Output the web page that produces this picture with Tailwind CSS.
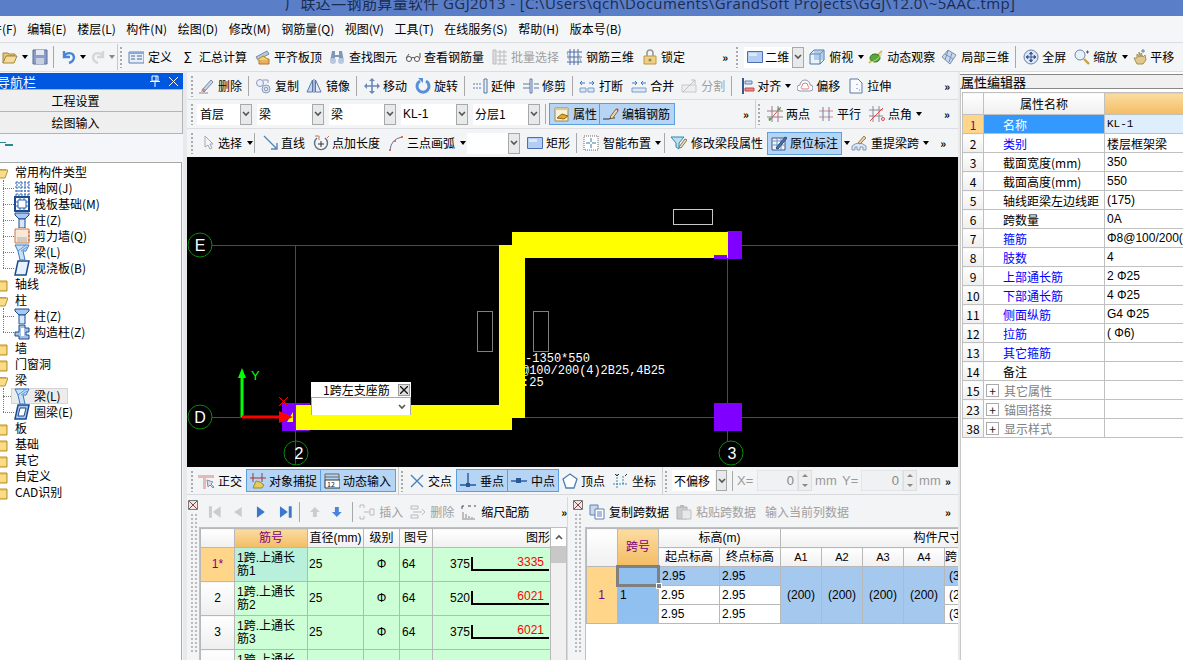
<!doctype html>
<html>
<head>
<meta charset="utf-8">
<title>GGJ2013</title>
<script src="https://cdn.jsdelivr.net/npm/@tailwindcss/browser@4"></script>
</head>
<body class="w-[1183px] h-[660px] overflow-hidden bg-[#f3f4f6] text-[12px] leading-[16px] text-black font-['Noto_Sans_CJK_SC','Liberation_Sans',sans-serif]">

<!-- icon sheet -->
<svg class="hidden">
  <symbol id="open" viewBox="0 0 16 16"><path d="M1 4h5l1 1h6v2H5L1 14z" fill="#e8c878" stroke="#a08840"/><path d="M1 14l3-7h11l-3 7z" fill="#f6dc98" stroke="#a08840"/></symbol>
  <symbol id="save" viewBox="0 0 16 16"><path d="M1 1h14v14H1z" fill="#8a9cc8" stroke="#5a6a98"/><path d="M4 1h8v5H4z" fill="#e4e8f0"/><path d="M4 9h8v6H4z" fill="#c8d0e0"/></symbol>
  <symbol id="undo" viewBox="0 0 16 16"><path d="M3 2v6h6M3 7c3-4 9-4 10 1 0 3-2 5-5 6" fill="none" stroke="#4a86d8" stroke-width="2.4"/></symbol>
  <symbol id="redo" viewBox="0 0 16 16"><path d="M13 2v6H7M13 7c-3-4-9-4-10 1 0 3 2 5 5 6" fill="none" stroke="#d0d8d8" stroke-width="2.4"/></symbol>
  <symbol id="define" viewBox="0 0 16 16"><path d="M1 3h15v11H1z" fill="#e8eef8" stroke="#6080b0"/><path d="M1 3h15v2H1z" fill="#8aa8d8"/><path d="M3 7h4M3 10h4M9 7h5M9 10h5" stroke="#506890"/></symbol>
  <symbol id="level" viewBox="0 0 16 16"><path d="M1 8l11-6 2 3L3 11z" fill="#b8c8e0" stroke="#7088a8"/><path d="M4 10h10v5H4z" fill="#e8b060" stroke="#b07830"/><path d="M2 11l6-4 6 4" fill="#f0d860" stroke="#b08820"/></symbol>
  <symbol id="binoc" viewBox="0 0 16 16"><path d="M3 2h3v4h4V2h3l2 11h-5V8H6v5H1z" fill="#8098b8"/><circle cx="4" cy="12" r="3" fill="#b8c8e0"/><circle cx="12" cy="12" r="3" fill="#b8c8e0"/></symbol>
  <symbol id="glass" viewBox="0 0 16 16"><circle cx="4" cy="10" r="2.5" fill="#fff" stroke="#555"/><circle cx="12" cy="10" r="2.5" fill="#fff" stroke="#555"/><path d="M6 9q2-1 4 0M1 9l3-4M15 9V4" fill="none" stroke="#555"/></symbol>
  <symbol id="batch" viewBox="0 0 16 16"><path d="M1 1h3v14H1zM5 3h10M5 7h10M5 11h10M5 15h10M8 1v14M12 1v14" fill="#ddd" stroke="#bcbcbc"/></symbol>
  <symbol id="cage" viewBox="0 0 16 16"><path d="M1 3h15M1 8h15M1 13h15M4 0v16M8 0v16M12 0v16" stroke="#4a6ca8" fill="none"/><path d="M1 3l3 10M12 3l3 10" stroke="#9ab" fill="none"/></symbol>
  <symbol id="lock" viewBox="0 0 16 16"><path d="M5 7V4a3 3 0 0 1 6 0v3" fill="none" stroke="#999" stroke-width="1.6"/><path d="M2 7h12v8H2z" fill="#f0d080" stroke="#b89840"/><circle cx="8" cy="11" r="1.5" fill="#886"/></symbol>
  <symbol id="rect" viewBox="0 0 16 16"><path d="M.5 2.5h15v11H.5z" fill="#b4cdf2" stroke="#4f6fb4"/><path d="M2 4h8v3H2z" fill="#dbe7fa"/></symbol>
  <symbol id="cube" viewBox="0 0 16 16"><path d="M1 5l4-4h10v10l-4 4H1z" fill="#e8f2fa" stroke="#5078a0"/><path d="M1 5h10v10M11 5l4-4" fill="none" stroke="#5078a0"/><path d="M5 1h10v10H5z" fill="#7aa8d8" opacity=".5"/></symbol>
  <symbol id="orbit" viewBox="0 0 16 16"><path d="M1 14L14 2" stroke="#d8c050" stroke-width="2"/><ellipse cx="7" cy="9" rx="5" ry="4" fill="#58a838" stroke="#307018"/><path d="M2 13q6 0 12-8" fill="none" stroke="#b8d8a0"/></symbol>
  <symbol id="part" viewBox="0 0 16 16"><path d="M1 8l6-7 8 5-6 9z" fill="#c8d8ee" stroke="#7890b0"/><path d="M4 5l8 5M7 2l-3 9M11 4l-3 9" stroke="#7890b0" fill="none"/></symbol>
  <symbol id="full" viewBox="0 0 16 16"><circle cx="8" cy="8" r="7" fill="#dce6f4" stroke="#6a84ac"/><path d="M8 3v10M3 8h10M8 3l-1.500 2h3zM8 13l-1.500-2h3zM3 8l2-1.500v3zM13 8l-2-1.500v3z" stroke="#3a5a90" fill="#3a5a90"/></symbol>
  <symbol id="zoom" viewBox="0 0 16 16"><circle cx="6" cy="6" r="5" fill="#e8f0fa" stroke="#7088a8"/><path d="M10 10l5 5" stroke="#c8a040" stroke-width="2.400"/><path d="M12 3h3M13.500 1.500v3" stroke="#555"/></symbol>
  <symbol id="hand" viewBox="0 0 16 16"><path d="M2 9h3V5l2 3V3l2 5V4l2 4 2-2 1 5-3 4H5z" fill="#e0c890" stroke="#a89050"/><path d="M11 0v4M9 2h4" stroke="#6080a0"/></symbol>
  <symbol id="erase" viewBox="0 0 16 16"><path d="M1 15h9" stroke="#889"/><path d="M4 12l9-10 2 2-9 10z" fill="#c8d4e8" stroke="#7a88a8"/><path d="M3 14l2-4 3 2z" fill="#c88868"/></symbol>
  <symbol id="copy" viewBox="0 0 16 16"><circle cx="5" cy="5" r="3.500" fill="#eef" stroke="#8a9ab8"/><circle cx="11" cy="11" r="4" fill="#dde6f4" stroke="#8a9ab8"/><circle cx="11" cy="11" r="1.800" fill="none" stroke="#8a9ab8"/><path d="M8 2h5v3" stroke="#8a9ab8" fill="none"/></symbol>
  <symbol id="mirror" viewBox="0 0 16 16"><path d="M8 1v14" stroke="#5a78a8"/><path d="M6.500 2v12H1z" fill="#c8d8f0" stroke="#5a78a8"/><path d="M9.500 2v12H15z" fill="#e8eef8" stroke="#5a78a8"/></symbol>
  <symbol id="move" viewBox="0 0 16 16"><path d="M8 1v14M1 8h14" stroke="#6888b8" stroke-width="1.600"/><path d="M8 0l3 3H5zM8 16l3-3H5zM0 8l3-3v6zM16 8l-3-3v6z" fill="#6888b8"/></symbol>
  <symbol id="rotate" viewBox="0 0 16 16"><path d="M5 3a6 6 0 1 0 6 0" fill="none" stroke="#5890d8" stroke-width="3"/><path d="M3 0h5v5z" fill="#5890d8"/></symbol>
  <symbol id="extend" viewBox="0 0 16 16"><path d="M1 6h9M1 10h9" stroke="#5a78a8" stroke-dasharray="2 1"/><path d="M12 1h3v14h-3z" fill="#e8eef8" stroke="#5a78a8"/></symbol>
  <symbol id="trim" viewBox="0 0 16 16"><path d="M0 6h8M0 10h8M11 6h5M11 10h5" stroke="#5a78a8"/><path d="M7 1h2v14H7z" fill="#e8eef8" stroke="#5a78a8"/></symbol>
  <symbol id="break" viewBox="0 0 16 16"><path d="M1 10h6v4H1zM9 10h6v4H9z" fill="#dce8f8" stroke="#7a9cc8"/><path d="M1 5h5M1 5l2-2M1 5l2 2M15 5h-5M15 5l-2-2M15 5l-2 2" stroke="#3878c8" fill="none"/></symbol>
  <symbol id="merge" viewBox="0 0 16 16"><path d="M1 10h14v4H1z" fill="#dce8f8" stroke="#7a9cc8"/><path d="M1 5h5M6 5L4 3M6 5L4 7M15 5h-5M10 5l2-2M10 5l2 2" stroke="#3878c8" fill="none"/></symbol>
  <symbol id="split" viewBox="0 0 16 16"><path d="M1 7h14v7H1z" fill="#eee" stroke="#c8c8c8"/><path d="M2 14L14 2M10 2h4v4" stroke="#c0c0c0" fill="none"/></symbol>
  <symbol id="align" viewBox="0 0 16 16"><path d="M3 0v16" stroke="#385890" stroke-width="2"/><path d="M5 3h7v3H5z" fill="#c8d8f0" stroke="#6080b0"/><path d="M5 10h9v3H5z" fill="#e88888" stroke="#c84848"/></symbol>
  <symbol id="offset" viewBox="0 0 16 16"><path d="M3 13a3 3 0 0 1 0-6 5 5 0 0 1 10 0 3 3 0 0 1 0 6z" fill="#fff" stroke="#8898b0"/><path d="M5 11a2 2 0 0 1 0-3 3 3 0 0 1 6 0 2 2 0 0 1 0 3z" fill="none" stroke="#e87878"/></symbol>
  <symbol id="stretch" viewBox="0 0 16 16"><path d="M2 1h8l4 4v10H2z" fill="#f8fafd" stroke="#5a78a8"/><path d="M9 6v2M9 10v2M11 12h2" stroke="#5a78a8" stroke-dasharray="1 1"/></symbol>
  <symbol id="prop" viewBox="0 0 16 16"><path d="M1 2h13v13H1z" fill="#f8f0d8" stroke="#a08848"/><path d="M1 2h13v2H1z" fill="#d8c898"/><path d="M3 12l5-4 6 2-4 3z" fill="#e8a820" stroke="#906810"/></symbol>
  <symbol id="edit" viewBox="0 0 16 16"><path d="M0 13h6q3-2 6-1" fill="none" stroke="#333"/><path d="M7 11l6-8 2 2-6 8z" fill="#e8d8b8" stroke="#886840"/><path d="M13 3l2 2 1-1-2-2z" fill="#d85050"/></symbol>
  <symbol id="twop" viewBox="0 0 16 16"><path d="M0 5h16M0 11h16M5 0v16M11 0v16" stroke="#9a7a8a"/><path d="M2 15L14 1" stroke="#d85858"/><circle cx="3" cy="13" r="1.500" fill="#58a858"/><circle cx="12" cy="3" r="1.500" fill="#58a858"/></symbol>
  <symbol id="para" viewBox="0 0 16 16"><path d="M1 5h14M1 11h14" stroke="#d88888"/><path d="M5 1v14M11 1v14" stroke="#6880a8"/></symbol>
  <symbol id="angle" viewBox="0 0 16 16"><path d="M0 4h14M0 10h14M4 0v16M10 0v16" stroke="#8a8a9a"/><path d="M1 15L14 2" stroke="#d84848"/><circle cx="14" cy="13" r="1.500" fill="none" stroke="#d84848"/></symbol>
  <symbol id="cursor" viewBox="0 0 16 16"><path d="M5 1v11l3-2 2 4 2-1-2-4h3z" fill="#f4f6fa" stroke="#a0a8b8"/></symbol>
  <symbol id="line" viewBox="0 0 16 16"><path d="M1 1l13 13M14 8v6H8" fill="none" stroke="#5a84b8" stroke-width="1.400"/></symbol>
  <symbol id="pluslen" viewBox="0 0 16 16"><path d="M4 3a6.500 6.500 0 1 0 8 0" fill="none" stroke="#5a6e88" stroke-width="1.400"/><path d="M8 6v6M5 9h6" stroke="#333"/><path d="M2 1h4v4M14 3l2-2" stroke="#d07050" fill="none"/></symbol>
  <symbol id="arc" viewBox="0 0 16 16"><path d="M2 15Q3 4 14 2" fill="none" stroke="#5a78a8"/><path d="M1 14h2v2H1zM6 5h2v2H6zM13 1h2v2h-2z" fill="#e87050"/></symbol>
  <symbol id="smart" viewBox="0 0 16 16"><path d="M1 1h14v14H1z" fill="#fff" stroke="#666" stroke-dasharray="1 1"/><path d="M8 3v4M8 9v4M3 8h4M9 8h4" stroke="#3878a8"/></symbol>
  <symbol id="filter" viewBox="0 0 16 16"><path d="M0 2h13L8 8v6L5 12V8z" fill="#b8e0f0" stroke="#3088a8"/><path d="M8 12l6-8 2 1-6 8z" fill="#e8e0c0" stroke="#887850"/></symbol>
  <symbol id="mark" viewBox="0 0 16 16"><path d="M1 3h13v12H1z" fill="#eef4fc" stroke="#3a5a8a"/><path d="M1 6h13M1 10h13M6 3v12M10 3v12" stroke="#7890b8"/><path d="M5 13L14 2l2 1-9 11z" fill="#4878b8" stroke="#28487a"/></symbol>
  <symbol id="refetch" viewBox="0 0 16 16"><path d="M1 15v-4q7-6 14 0v4h-3v-3H9v3H6v-3H4v3z" fill="#dce6f4" stroke="#8098b8"/><path d="M7 8l6-7 2 2-6 6z" fill="#e8d0a0" stroke="#a08050"/></symbol>
  <symbol id="ortho" viewBox="0 0 16 16"><path d="M0 2h16v3H8v11H5V5H0z" fill="#e8b8b8"/><path d="M9 7l1 7 2-2 3 3 1-1-3-3 2-2z" fill="#d8dce8" stroke="#8890a8"/></symbol>
  <symbol id="snap" viewBox="0 0 16 16"><path d="M3 0v9M12 0v9M0 5h16" stroke="#a03838"/><path d="M3 15l3-7 4 1 4 3-2 3z" fill="#e8c860" stroke="#a08828"/></symbol>
  <symbol id="dyn" viewBox="0 0 16 16"><path d="M1 1h14M1 4h14M1 1v6M15 1v6" stroke="#666" fill="none"/><path d="M1 7h15v8H1z" fill="#fff" stroke="#333"/><text x="3" y="14" font-size="7" fill="#111">12</text></symbol>
  <symbol id="cross" viewBox="0 0 16 16"><path d="M2 2l12 12M14 2L2 14" stroke="#4a80b8" stroke-width="1.400"/></symbol>
  <symbol id="perp" viewBox="0 0 16 16"><path d="M8 0v11M0 12h16" stroke="#28589a" stroke-width="1.400"/><path d="M6 10h4v4H6z" fill="#28589a"/></symbol>
  <symbol id="mid" viewBox="0 0 16 16"><path d="M0 8h16" stroke="#28589a" stroke-width="1.400"/><path d="M5 5h5v5H5z" fill="#28589a"/></symbol>
  <symbol id="vert" viewBox="0 0 16 16"><path d="M8 1l7 5-3 9H4L1 6z" fill="#fff" stroke="#4a80b8" stroke-width="1.300"/></symbol>
  <symbol id="coord" viewBox="0 0 16 16"><path d="M5 1v14M1 11h14M11 3v8" stroke="#3a88a8" stroke-dasharray="2 1"/><path d="M3 1l2 2 2-2M13 3l2-2" stroke="#333" fill="none"/></symbol>
  <symbol id="ins" viewBox="0 0 16 16"><path d="M1 1h4v3M1 15h4v-3M1 1v3M1 12v3M5 8h6M11 5v6h4V5z" fill="none" stroke="#bbb"/></symbol>
  <symbol id="del" viewBox="0 0 16 16"><path d="M1 2h7v3H1zM1 11h7v3H1z" fill="none" stroke="#bbb"/><path d="M3 8h9M12 5l3 3-3 3" fill="none" stroke="#bbb"/></symbol>
  <symbol id="scale" viewBox="0 0 16 16"><path d="M1 2h2M7 2h3M13 2h2M1 2v3" stroke="#444" fill="none"/><path d="M2 14V8M5 14v-4M8 14v-2M11 14v-1M1 15h13" stroke="#888"/></symbol>
  <symbol id="cpy2" viewBox="0 0 16 16"><path d="M1 1h8v10H1z" fill="#c8d8f0" stroke="#6080b0"/><path d="M6 5h9v10H6z" fill="#fff" stroke="#6080b0"/><path d="M8 8h5M8 10h5M8 12h5" stroke="#6080b0"/></symbol>
  <symbol id="paste" viewBox="0 0 16 16"><path d="M1 3h10v12H1z" fill="#ccc" stroke="#b0b0b0"/><path d="M4 1h4v3H4z" fill="#bbb"/><path d="M6 6h9v9H6z" fill="#e8e8e8" stroke="#c0c0c0"/></symbol>
  <symbol id="t-grid" viewBox="0 0 16 16"><path d="M1 3h14M1 7h14M1 11h14M1 15h14M3 1v15M7 1v15M11 1v15M15 1v15" stroke="#2a60b0" stroke-dasharray="2 1"/></symbol>
  <symbol id="t-raft" viewBox="0 0 16 16"><path d="M1 1h14v14H1z" fill="#fff" stroke="#1a4a90" stroke-width="2"/><path d="M4 4h8v8H4z" fill="none" stroke="#2a60b0"/><path d="M1 6h3M1 10h3M12 6h3M12 10h3M6 1v3M10 1v3M6 12v3M10 12v3" stroke="#2a60b0"/></symbol>
  <symbol id="t-col" viewBox="0 0 16 16"><path d="M1 1h14v2l-4 4H5L1 3z" fill="#a8c8f0" stroke="#1a4a90"/><path d="M5 7h6v9H5z" fill="#d8e8fa" stroke="#1a4a90"/></symbol>
  <symbol id="t-shear" viewBox="0 0 16 16"><path d="M1 1h14v14H1z" fill="#f8e8d8" stroke="#c87848"/><path d="M3 9h10v5H3z" fill="#b8b8b8" opacity=".6"/><path d="M14 4h2M14 8h2M14 12h2" stroke="#c85828"/></symbol>
  <symbol id="t-beam" viewBox="0 0 16 16"><path d="M1 1h14l-3 6H9l2 9H6L4 7z" fill="#c8e0f8" stroke="#3a78c0"/><path d="M4 7l8-6M7 7l6-4" stroke="#5a98d8"/></symbol>
  <symbol id="t-slab" viewBox="0 0 16 16"><path d="M4 1h11l-3 14H1z" fill="#e8f2fc" stroke="#1a4a90" stroke-width="1.500"/></symbol>
  <symbol id="t-cons" viewBox="0 0 16 16"><path d="M5 1h6v3h4v4h-3v3h3v4H5v-3H1V8h4V5H5z" fill="#a8c0e0" stroke="#1a4a90"/><path d="M7 4h3v8H7z" fill="#fff"/></symbol>
  <symbol id="t-ring" viewBox="0 0 16 16"><path d="M4 1h11l-3 14H1z" fill="#a8c8f0" stroke="#1a4a90" stroke-width="1.500"/><path d="M6 4h6l-2 8H4z" fill="#fff" stroke="#1a4a90"/></symbol>
  <symbol id="f-open" viewBox="0 0 16 16"><path d="M0 3h6l2 2h6v2H0z" fill="#d8a838"/><path d="M0 14l3-8h13l-3 8z" fill="#f8dc88" stroke="#b89030"/></symbol>
  <symbol id="f-shut" viewBox="0 0 16 16"><path d="M0 3h6l2 2h7v10H0z" fill="#f0c860" stroke="#b89030"/><path d="M1 7h13v7H1z" fill="#f8dc88"/></symbol>
  <symbol id="dd" viewBox="0 0 8 8"><path d="M1 2l3 3 3-3" fill="none" stroke="#555" stroke-width="1.600"/></symbol>
</svg>

<!-- title bar -->
<div class="h-[16px] overflow-hidden bg-[#5a7ec8] pl-[285px] whitespace-nowrap text-[#1b2c50] text-[15px] leading-[16px] tracking-[.38px] font-['Open_Sans','Noto_Sans_CJK_SC',sans-serif]"><div class="-mt-[5px]">广联达—钢筋算量软件 GGJ2013 - [C:\Users\qch\Documents\GrandSoft Projects\GGJ\12.0\~5AAC.tmp]</div></div>

<!-- menu bar -->
<nav class="h-[26px] flex items-center gap-[10.6px] overflow-hidden -ml-[22px] bg-[#f5f6f8] whitespace-nowrap">
  <span>文件(F)</span><span>编辑(E)</span><span>楼层(L)</span><span>构件(N)</span><span>绘图(D)</span><span>修改(M)</span><span>钢筋量(Q)</span><span>视图(V)</span><span>工具(T)</span><span>在线服务(S)</span><span>帮助(H)</span><span>版本号(B)</span>
</nav>

<!-- main toolbar -->
<div class="h-[30px] flex items-center border-y border-[#dcdde0] bg-[#f4f5f7] whitespace-nowrap [&>span]:flex [&>span]:items-center [&>span]:shrink-0 [&>span>svg]:size-4 [&>span>svg]:shrink-0">
  <span class="ml-[2px]"><svg><use href="#open"/></svg></span><i class="ml-[4px] border-x-[3.5px] border-t-[4px] border-x-transparent border-t-black"></i>
  <span class="ml-[4px]"><svg><use href="#save"/></svg></span><i class="ml-[5px] w-px h-[22px] bg-[#a8a8a8]"></i>
  <span class="ml-[7px]"><svg><use href="#undo"/></svg></span><i class="ml-[3px] border-x-[3.5px] border-t-[4px] border-x-transparent border-t-black"></i>
  <span class="ml-[4px]"><svg><use href="#redo"/></svg></span><i class="ml-[3px] border-x-[3.5px] border-t-[4px] border-x-transparent border-t-[#888]"></i>
  <i class="ml-[2px] w-px h-[26px] bg-[#c8c8c8]"></i><i class="ml-px w-[4px] h-[22px] bg-[radial-gradient(#aaa_1px,transparent_1.2px)] bg-[length:4px_4px]"></i>
  <span class="ml-[5px] gap-[4px]"><svg><use href="#define"/></svg>定义</span>
  <span class="ml-[8px] gap-[3px]"><b class="w-4 text-center text-[14px] font-normal">Σ</b>汇总计算</span>
  <span class="ml-[8px] gap-[3px]"><svg><use href="#level"/></svg>平齐板顶</span>
  <span class="ml-[7px] gap-[4px]"><svg><use href="#binoc"/></svg>查找图元</span>
  <span class="ml-[8px] gap-[3px]"><svg><use href="#glass"/></svg>查看钢筋量</span>
  <span class="ml-[8px] gap-[3px] text-[#a0a0a0]"><svg><use href="#batch"/></svg>批量选择</span>
  <span class="ml-[7px] gap-[4px]"><svg><use href="#cage"/></svg>钢筋三维</span>
  <span class="ml-[8px] gap-[3px]"><svg><use href="#lock"/></svg>锁定</span>
  <span class="ml-[37px] w-[8px] text-[11px] font-bold">»</span><i class="ml-[5px] w-[4px] h-[22px] bg-[radial-gradient(#aaa_1px,transparent_1.2px)] bg-[length:4px_4px]"></i>
  <span class="ml-[5px] w-[48px] h-[21px] bg-white gap-[2px] pl-[3px] [&>svg]:size-4"><svg><use href="#rect"/></svg>二维</span>
  <div class="w-[12px] h-[21px] flex items-center justify-center bg-[#e8e9eb] border border-[#a8a8a8]"><svg class="w-2 h-2"><use href="#dd"/></svg></div>
  <span class="ml-[5px] gap-[4px]"><svg><use href="#cube"/></svg>俯视</span><i class="ml-[5px] border-x-[3.5px] border-t-[4px] border-x-transparent border-t-black"></i>
  <span class="ml-[4px] gap-[3px]"><svg><use href="#orbit"/></svg>动态观察</span>
  <span class="ml-[6px] gap-[4px]"><svg><use href="#part"/></svg>局部三维</span><i class="ml-[6px] w-px h-[22px] bg-[#a8a8a8]"></i>
  <span class="ml-[7px] gap-[3px]"><svg><use href="#full"/></svg>全屏</span>
  <span class="ml-[8px] gap-[3px]"><svg><use href="#zoom"/></svg>缩放</span><i class="ml-[5px] border-x-[3.5px] border-t-[4px] border-x-transparent border-t-black"></i>
  <span class="ml-[4px] gap-[2px]"><svg><use href="#hand"/></svg>平移</span>
</div>

<div class="h-[588px] flex">
  <!-- navigation panel -->
  <aside class="w-[183px] shrink-0 flex flex-col overflow-hidden bg-[#f4f6f9]">
    <div class="h-[16px] mt-[1px] flex items-center bg-[#0058e0] text-white -indent-[3px]">
      <span class="text-[13px] leading-[15px] whitespace-nowrap">导航栏</span>
      <svg class="ml-auto w-[10px] h-[12px]" viewBox="0 0 10 12"><path d="M2 1h6v5H2zM0 6.500h10M5 7v5M6 1v5" fill="none" stroke="#fff"/></svg>
      <svg class="ml-[9px] mr-[5px] w-[9px] h-[9px]" viewBox="0 0 9 9"><path d="M0 0l9 9M9 0L0 9" stroke="#fff"/></svg>
    </div>
    <div class="h-[23px] -ml-[32px] flex items-center justify-center bg-[#efefef] border border-[#b4b4b4]">工程设置</div>
    <div class="h-[22px] -ml-[32px] flex items-center justify-center bg-[#efefef] border border-[#b4b4b4] border-t-0">绘图输入</div>
    <div class="h-[28px] pt-[8px] flex flex-col gap-[1px]"><i class="w-[6px] h-px bg-[#2a8a8a]"></i><i class="ml-[5px] w-[8px] h-[2px] bg-[#2a8a8a]"></i></div>
    <div class="flex-1 bg-white border-t border-r border-[#a8a8a8] mr-[1px] pt-[1px] [&_svg]:size-4 [&_svg]:shrink-0 [&>div]:flex [&>div]:items-center [&>div]:h-4 whitespace-nowrap">
      <div class="gap-[7px] -ml-[8px]"><svg><use href="#f-open"/></svg>常用构件类型</div>
      <section class="relative pl-[14px] [&>div]:flex [&>div]:items-center [&>div]:h-4 [&>div>svg]:mr-[4px]">
        <i class="absolute left-[3px] top-0 bottom-[8px] border-l border-dotted border-[#777]"></i>
        <div><i class="-ml-[11px] w-[11px] border-t border-dotted border-[#777]"></i><svg><use href="#t-grid"/></svg>轴网(J)</div>
        <div><i class="-ml-[11px] w-[11px] border-t border-dotted border-[#777]"></i><svg><use href="#t-raft"/></svg>筏板基础(M)</div>
        <div><i class="-ml-[11px] w-[11px] border-t border-dotted border-[#777]"></i><svg><use href="#t-col"/></svg>柱(Z)</div>
        <div><i class="-ml-[11px] w-[11px] border-t border-dotted border-[#777]"></i><svg><use href="#t-shear"/></svg>剪力墙(Q)</div>
        <div><i class="-ml-[11px] w-[11px] border-t border-dotted border-[#777]"></i><svg><use href="#t-beam"/></svg>梁(L)</div>
        <div><i class="-ml-[11px] w-[11px] border-t border-dotted border-[#777]"></i><svg><use href="#t-slab"/></svg>现浇板(B)</div>
      </section>
      <div class="gap-[7px] -ml-[8px]"><svg><use href="#f-shut"/></svg>轴线</div>
      <div class="gap-[7px] -ml-[8px]"><svg><use href="#f-open"/></svg>柱</div>
      <section class="relative pl-[14px] [&>div]:flex [&>div]:items-center [&>div]:h-4 [&>div>svg]:mr-[4px]">
        <i class="absolute left-[3px] top-0 bottom-[8px] border-l border-dotted border-[#777]"></i>
        <div><i class="-ml-[11px] w-[11px] border-t border-dotted border-[#777]"></i><svg><use href="#t-col"/></svg>柱(Z)</div>
        <div><i class="-ml-[11px] w-[11px] border-t border-dotted border-[#777]"></i><svg><use href="#t-cons"/></svg>构造柱(Z)</div>
      </section>
      <div class="gap-[7px] -ml-[8px]"><svg><use href="#f-shut"/></svg>墙</div>
      <div class="gap-[7px] -ml-[8px]"><svg><use href="#f-shut"/></svg>门窗洞</div>
      <div class="gap-[7px] -ml-[8px]"><svg><use href="#f-open"/></svg>梁</div>
      <section class="relative pl-[14px] [&>div]:flex [&>div]:items-center [&>div]:h-4 [&>div>svg]:mr-[4px]">
        <i class="absolute left-[3px] top-0 bottom-[8px] border-l border-dotted border-[#777]"></i>
        <div><i class="-ml-[11px] w-[8px] border-t border-dotted border-[#777]"></i><span class="w-[57px] h-4 flex items-center gap-[4px] pl-[2px] bg-[#ececec] border border-[#d4d4d4]"><svg><use href="#t-beam"/></svg>梁(L)</span></div>
        <div><i class="-ml-[11px] w-[11px] border-t border-dotted border-[#777]"></i><svg><use href="#t-ring"/></svg>圈梁(E)</div>
      </section>
      <div class="gap-[7px] -ml-[8px]"><svg><use href="#f-shut"/></svg>板</div>
      <div class="gap-[7px] -ml-[8px]"><svg><use href="#f-shut"/></svg>基础</div>
      <div class="gap-[7px] -ml-[8px]"><svg><use href="#f-shut"/></svg>其它</div>
      <div class="gap-[7px] -ml-[8px]"><svg><use href="#f-shut"/></svg>自定义</div>
      <div class="gap-[7px] -ml-[8px]"><svg><use href="#f-shut"/></svg>CAD识别</div>
    </div>
  </aside>
  <div class="w-[4px] shrink-0 bg-[#e8e9eb]"></div>

  <!-- centre column -->
  <main class="w-[771px] shrink-0 flex flex-col">
    <div class="h-[28px] flex items-center border-b border-[#dcdde0] whitespace-nowrap [&>span]:flex [&>span]:items-center [&>span]:shrink-0 [&>span>svg]:size-4 [&>span>svg]:shrink-0">
      <i class="ml-[3px] w-[4px] h-[22px] bg-[radial-gradient(#aaa_1px,transparent_1.2px)] bg-[length:4px_4px]"></i>
      <span class="ml-[4px] gap-[4px]"><svg><use href="#erase"/></svg>删除</span><i class="ml-[6px] w-px h-[20px] bg-[#a8a8a8]"></i>
      <span class="ml-[6px] gap-[4px]"><svg><use href="#copy"/></svg>复制</span>
      <span class="ml-[7px] gap-[4px]"><svg><use href="#mirror"/></svg>镜像</span><i class="ml-[6px] w-px h-[20px] bg-[#a8a8a8]"></i>
      <span class="ml-[7px] gap-[3px]"><svg><use href="#move"/></svg>移动</span>
      <span class="ml-[8px] gap-[3px]"><svg><use href="#rotate"/></svg>旋转</span><i class="ml-[6px] w-px h-[20px] bg-[#a8a8a8]"></i>
      <span class="ml-[7px] gap-[3px]"><svg><use href="#extend"/></svg>延伸</span>
      <span class="ml-[8px] gap-[3px]"><svg><use href="#trim"/></svg>修剪</span><i class="ml-[6px] w-px h-[20px] bg-[#a8a8a8]"></i>
      <span class="ml-[6px] gap-[4px]"><svg><use href="#break"/></svg>打断</span>
      <span class="ml-[8px] gap-[3px]"><svg><use href="#merge"/></svg>合并</span>
      <span class="ml-[7px] gap-[4px] text-[#a0a0a0]"><svg><use href="#split"/></svg>分割</span><i class="ml-[6px] w-px h-[20px] bg-[#a8a8a8]"></i>
      <span class="ml-[8px] gap-px"><svg><use href="#align"/></svg>对齐</span><i class="ml-[4px] border-x-[3.5px] border-t-[4px] border-x-transparent border-t-black"></i>
      <span class="ml-[6px] gap-[3px]"><svg><use href="#offset"/></svg>偏移</span>
      <span class="ml-[8px] gap-[3px]"><svg><use href="#stretch"/></svg>拉伸</span>
      <span class="ml-[53px] text-[11px] font-bold">»</span>
    </div>
    <div class="h-[29px] flex items-center border-b border-[#dcdde0] whitespace-nowrap [&>span]:flex [&>span]:items-center [&>span]:shrink-0 [&>span>svg]:size-4 [&>span>svg]:shrink-0">
      <i class="ml-[3px] w-[4px] h-[22px] bg-[radial-gradient(#aaa_1px,transparent_1.2px)] bg-[length:4px_4px]"></i>
      <span class="ml-[3px] w-[43px] h-[21px] bg-white pl-[3px]">首层</span><div class="w-[12px] h-[21px] flex items-center justify-center bg-[#e8e9eb] border border-[#a8a8a8]"><svg class="w-2 h-2"><use href="#dd"/></svg></div>
      <span class="ml-[5px] w-[55px] h-[21px] bg-white pl-[2px]">梁</span><div class="w-[12px] h-[21px] flex items-center justify-center bg-[#e8e9eb] border border-[#a8a8a8]"><svg class="w-2 h-2"><use href="#dd"/></svg></div>
      <span class="ml-[5px] w-[55px] h-[21px] bg-white pl-[2px]">梁</span><div class="w-[12px] h-[21px] flex items-center justify-center bg-[#e8e9eb] border border-[#a8a8a8]"><svg class="w-2 h-2"><use href="#dd"/></svg></div>
      <span class="ml-[5px] w-[55px] h-[21px] bg-white pl-[2px] font-['Liberation_Sans',sans-serif]">KL-1</span><div class="w-[12px] h-[21px] flex items-center justify-center bg-[#e8e9eb] border border-[#a8a8a8]"><svg class="w-2 h-2"><use href="#dd"/></svg></div>
      <span class="ml-[5px] w-[55px] h-[21px] bg-white pl-[2px]">分层1</span><div class="w-[12px] h-[21px] flex items-center justify-center bg-[#e8e9eb] border border-[#a8a8a8]"><svg class="w-2 h-2"><use href="#dd"/></svg></div>
      <i class="ml-[5px] w-px h-[20px] bg-[#a8a8a8]"></i>
      <span class="ml-[3px] w-[51px] h-[22px] gap-[3px] pl-[4px] bg-[#b6d4f3] border border-[#5c9fe0]"><svg><use href="#prop"/></svg>属性</span>
      <span class="w-[75px] h-[22px] gap-[3px] pl-[3px] bg-[#b6d4f3] border border-l-0 border-[#5c9fe0]"><svg><use href="#edit"/></svg>编辑钢筋</span>
      <span class="ml-[68px] w-[8px] text-[11px] font-bold">»</span><i class="ml-[4px] w-px h-[28px] bg-[#d0d0d0]"></i><i class="ml-px w-[4px] h-[22px] bg-[radial-gradient(#aaa_1px,transparent_1.2px)] bg-[length:4px_4px]"></i>
      <span class="ml-[6px] gap-[3px]"><svg><use href="#twop"/></svg>两点</span>
      <span class="ml-[8px] gap-[3px]"><svg><use href="#para"/></svg>平行</span>
      <span class="ml-[8px] gap-[3px]"><svg><use href="#angle"/></svg>点角</span><i class="ml-[4px] border-x-[3.5px] border-t-[4px] border-x-transparent border-t-black"></i>
      <span class="ml-[22px] text-[11px] font-bold">»</span>
    </div>
    <div class="h-[28px] flex items-center whitespace-nowrap [&>span]:flex [&>span]:items-center [&>span]:shrink-0 [&>span>svg]:size-4 [&>span>svg]:shrink-0">
      <i class="ml-[3px] w-[4px] h-[22px] bg-[radial-gradient(#aaa_1px,transparent_1.2px)] bg-[length:4px_4px]"></i>
      <span class="ml-[6px] gap-[2px]"><svg><use href="#cursor"/></svg>选择</span><i class="ml-[5px] border-x-[3.5px] border-t-[4px] border-x-transparent border-t-black"></i><i class="ml-px w-px h-[20px] bg-[#a8a8a8]"></i>
      <span class="ml-[8px] gap-[2px]"><svg><use href="#line"/></svg>直线</span>
      <span class="ml-[8px] gap-[3px]"><svg><use href="#pluslen"/></svg>点加长度</span>
      <span class="ml-[8px] gap-[3px]"><svg><use href="#arc"/></svg>三点画弧</span><i class="ml-[5px] border-x-[3.5px] border-t-[4px] border-x-transparent border-t-black"></i>
      <span class="ml-px w-[41px] h-[21px] bg-white"></span><div class="w-[12px] h-[21px] flex items-center justify-center bg-[#e8e9eb] border border-[#a8a8a8]"><svg class="w-2 h-2"><use href="#dd"/></svg></div>
      <span class="ml-[7px] gap-[3px]"><svg><use href="#rect"/></svg>矩形</span><i class="ml-[6px] w-px h-[20px] bg-[#a8a8a8]"></i>
      <span class="ml-[6px] gap-[4px]"><svg><use href="#smart"/></svg>智能布置</span><i class="ml-[4px] border-x-[3.5px] border-t-[4px] border-x-transparent border-t-black"></i><i class="ml-[3px] w-px h-[20px] bg-[#a8a8a8]"></i>
      <span class="ml-[6px] gap-[4px]"><svg><use href="#filter"/></svg>修改梁段属性</span>
      <span class="ml-[4px] w-[75px] h-[23px] gap-[3px] pl-[3px] bg-[#b6d4f3] border border-[#5c9fe0]"><svg><use href="#mark"/></svg>原位标注</span><i class="ml-[2px] border-x-[3.5px] border-t-[4px] border-x-transparent border-t-black"></i>
      <span class="ml-px gap-[4px]"><svg><use href="#refetch"/></svg>重提梁跨</span><i class="ml-[4px] border-x-[3.5px] border-t-[4px] border-x-transparent border-t-black"></i>
      <span class="ml-[11px] text-[11px] font-bold">»</span>
    </div>

    <!-- drawing canvas -->
    <div class="relative h-[310px] bg-black overflow-hidden">
      <svg class="block" width="771" height="310" viewBox="187 157 771 310">
        <g fill="#fff" font-family="'Liberation Mono',monospace" font-size="12">
          <text x="525" y="362" textLength="65">-1350*550</text>
          <text x="522" y="374" textLength="143">@100/200(4)2B25,4B25</text>
          <text x="522" y="386">:25</text>
        </g>
        <g stroke="#f00" fill="none"><path d="M212 245.500H958M212 417.500H958M295.500 245V465M727.500 245V441"/></g>
        <g fill="none" stroke="#808080"><rect x="673.500" y="209.500" width="39" height="15" stroke="#c8c8c8"/><rect x="477.500" y="311.500" width="15" height="40"/><rect x="533.500" y="311.500" width="15" height="40"/></g>
        <path d="M727 231h15v28h-28v-4h13zM714 403h28v28h-28zM282 403h28v28h-28z" fill="#8000ff"/>
        <path d="M512 232H728V258H525V418H512V430H296V405H499V245H512z" fill="#ff0"/>
        <path d="M714 258h13v-3h-13z" fill="#8000ff"/>
        <path d="M282 403h13v28h-13z" fill="#8000ff"/><path d="M293 412v10h-6z" fill="#ff0"/>
        <path d="M295.500 405V431" stroke="#f00"/>
        <g fill="none" stroke="#0a8a0a"><circle cx="200" cy="245" r="12"/><circle cx="200" cy="417" r="12"/><circle cx="296" cy="453" r="12"/><circle cx="731" cy="453" r="12"/></g>
        <g fill="#fff" font-family="'Liberation Sans',sans-serif" font-size="16" text-anchor="middle"><text x="200" y="251">E</text><text x="200" y="423">D</text><text x="299" y="459">2</text><text x="732" y="459">3</text></g>
        <path d="M240.500 417V378H238l4-10 4 10h-2.500v39z" fill="#0f0"/>
        <path d="M242 415.500h37V411l14 6-14 6v-4.500h-37z" fill="#f00"/>
        <path d="M279 397l9 9M288 397l-9 9" stroke="#f00"/>
        <text x="251" y="380" fill="#0f0" font-size="13" font-family="'Liberation Sans',sans-serif">Y</text>
      </svg>
      <div class="absolute left-[124px] top-[225px] w-[100px] h-[33px] bg-white">
        <div class="h-[15px] flex items-center pl-[12px] text-[12px] leading-[15px]">1跨左支座筋<span class="ml-auto mr-px w-[12px] h-[12px] flex items-center justify-center bg-[#e0e0e0] border border-[#999]"><svg class="w-2 h-2" viewBox="0 0 8 8"><path d="M0 0l8 8M8 0L0 8" stroke="#111" stroke-width="1.300"/></svg></span></div>
        <div class="h-[18px] flex items-center justify-end pr-[4px] border border-b-0 border-[#aaa]"><svg class="w-2 h-2"><use href="#dd"/></svg></div>
      </div>
    </div>

    <!-- snap toolbar -->
    <div class="h-[28px] flex items-center border-b border-[#d8d9dc] whitespace-nowrap [&>span]:flex [&>span]:items-center [&>span]:shrink-0 [&>span>svg]:size-4 [&>span>svg]:shrink-0">
      <i class="ml-[3px] w-[4px] h-[22px] bg-[radial-gradient(#aaa_1px,transparent_1.2px)] bg-[length:4px_4px]"></i>
      <span class="ml-[4px] gap-[4px]"><svg><use href="#ortho"/></svg>正交</span>
      <span class="ml-[4px] w-[75px] h-[23px] gap-[3px] pl-[3px] bg-[#b6d4f3] border border-[#5c9fe0]"><svg><use href="#snap"/></svg>对象捕捉</span>
      <span class="w-[75px] h-[23px] gap-[3px] pl-[3px] bg-[#b6d4f3] border border-l-0 border-[#5c9fe0]"><svg><use href="#dyn"/></svg>动态输入</span>
      <i class="ml-[2px] w-px h-[28px] bg-[#d0d0d0]"></i><i class="ml-px w-[4px] h-[22px] bg-[radial-gradient(#aaa_1px,transparent_1.2px)] bg-[length:4px_4px]"></i>
      <span class="ml-[5px] gap-[3px]"><svg><use href="#cross"/></svg>交点</span>
      <span class="ml-[4px] w-[52px] h-[23px] gap-[4px] pl-[3px] bg-[#b6d4f3] border border-[#5c9fe0]"><svg><use href="#perp"/></svg>垂点</span>
      <span class="w-[51px] h-[23px] gap-[4px] pl-[3px] bg-[#b6d4f3] border border-l-0 border-[#5c9fe0]"><svg><use href="#mid"/></svg>中点</span>
      <span class="ml-[3px] gap-[3px]"><svg><use href="#vert"/></svg>顶点</span>
      <span class="ml-[7px] gap-[4px]"><svg><use href="#coord"/></svg>坐标</span>
      <i class="ml-[6px] w-px h-[28px] bg-[#d0d0d0]"></i><i class="ml-px w-[4px] h-[22px] bg-[radial-gradient(#aaa_1px,transparent_1.2px)] bg-[length:4px_4px]"></i>
      <span class="ml-[4px] w-[43px] h-[21px] bg-white pl-[2px]">不偏移</span><div class="ml-px w-[11px] h-[21px] flex items-center justify-center bg-[#e8e9eb] border border-[#a8a8a8]"><svg class="w-2 h-2"><use href="#dd"/></svg></div>
      <i class="ml-[5px] w-px h-[20px] bg-[#a8a8a8]"></i>
      <span class="ml-[4px] w-[20px] text-[#9a9a9a] font-['Liberation_Sans',sans-serif] text-[13px]">X=</span>
      <span class="w-[41px] h-[21px] justify-end pr-[3px] bg-[#f0f1f3] border border-[#e4e5e7] text-[#888] font-['Liberation_Sans',sans-serif] text-[13px]">0</span>
      <div class="w-[14px] h-[21px] flex flex-col items-center justify-around bg-[#eee] border border-[#ddd]"><i class="border-x-[3px] border-b-[3px] border-x-transparent border-b-[#888]"></i><i class="border-x-[3px] border-t-[3px] border-x-transparent border-t-[#888]"></i></div>
      <span class="ml-[3px] w-[27px] text-[#9a9a9a] font-['Liberation_Sans',sans-serif] text-[13px]">mm</span>
      <span class="w-[19px] text-[#9a9a9a] font-['Liberation_Sans',sans-serif] text-[13px]">Y=</span>
      <span class="w-[42px] h-[21px] justify-end pr-[3px] bg-[#f0f1f3] border border-[#e4e5e7] text-[#888] font-['Liberation_Sans',sans-serif] text-[13px]">0</span>
      <div class="w-[14px] h-[21px] flex flex-col items-center justify-around bg-[#eee] border border-[#ddd]"><i class="border-x-[3px] border-b-[3px] border-x-transparent border-b-[#888]"></i><i class="border-x-[3px] border-t-[3px] border-x-transparent border-t-[#888]"></i></div>
      <span class="ml-[2px] w-[26px] text-[#9a9a9a] font-['Liberation_Sans',sans-serif] text-[13px]">mm</span>
      <span class="text-[11px] font-bold">»</span>
    </div>

    <!-- lower panels -->
    <div class="flex-1 min-h-0 mt-[2px] flex overflow-hidden">
      <!-- rebar list -->
      <section class="w-[380px] shrink-0 flex">
        <div class="w-[12px] shrink-0 pt-[3px]"><svg class="w-[10px] h-[10px] ml-px" viewBox="0 0 10 10"><path d="M.5.500h9v9h-9z" fill="#f4e4e4" stroke="#777"/><path d="M1 1l8 8M9 1L1 9" stroke="#804848"/></svg><i class="block mt-[3px] ml-[3px] w-[7px] h-[140px] bg-[radial-gradient(#bbb_1px,transparent_1.2px)] bg-[length:4px_4px]"></i></div>
        <div class="w-[368px] flex flex-col">
          <div class="h-[30px] shrink-0 flex items-center whitespace-nowrap text-[#a0a0a0] [&>span]:flex [&>span]:items-center [&>span]:shrink-0 [&>span>svg]:size-4 [&>span>svg]:shrink-0">
            <svg class="ml-[8px] size-4" viewBox="0 0 16 16"><path d="M2 2h3v12H2zM14 2v12L6 8z" fill="#ccc"/></svg>
            <svg class="ml-[9px] size-3" viewBox="0 0 12 12"><path d="M10 1v10L2 6z" fill="#ccc"/></svg>
            <svg class="ml-[12px] size-3" viewBox="0 0 12 12"><path d="M2 0v12l8-6z" fill="#3a78d0"/></svg>
            <svg class="ml-[11px] size-4" viewBox="0 0 16 16"><path d="M11 2h3v12h-3zM2 2v12l8-6z" fill="#3a78d0"/></svg>
            <i class="ml-[5px] w-px h-[20px] bg-[#a8a8a8]"></i>
            <svg class="ml-[9px] size-3" viewBox="0 0 12 12"><path d="M6 1l5 5H8v5H4V6H1z" fill="#ccc"/></svg>
            <svg class="ml-[11px] size-3" viewBox="0 0 12 12"><path d="M6 11l5-5H8V1H4v5H1z" fill="#4a86d8"/></svg>
            <i class="ml-[9px] w-px h-[20px] bg-[#a8a8a8]"></i>
            <span class="ml-[6px] gap-[4px]"><svg><use href="#ins"/></svg>插入</span>
            <span class="ml-[7px] gap-[4px]"><svg><use href="#del"/></svg>删除</span>
            <span class="ml-[7px] gap-[4px] text-black"><svg><use href="#scale"/></svg>缩尺配筋</span>
            <span class="ml-[32px] text-[11px] font-bold text-black">»</span>
          </div>
          <div class="flex-1 flex border border-b-0 border-[#c0c0c0] bg-white overflow-hidden">
            <table class="w-[350px] h-fit table-fixed border-collapse [&_td]:border [&_td]:border-[#b8b8b8] [&_td]:p-0 [&_th]:border [&_th]:border-[#b8b8b8] [&_th]:font-normal [&_th]:p-0 [&_th]:h-[19px] [&_th]:bg-linear-to-b [&_th]:from-white [&_th]:to-[#f0f0f0] font-['Liberation_Sans','Noto_Sans_CJK_SC',sans-serif] leading-[13px]">
              <colgroup><col class="w-[34px]"><col class="w-[73px]"><col class="w-[56px]"><col class="w-[36px]"><col class="w-[33px]"><col class="w-[118px]"></colgroup>
              <tr><th></th><th class="!from-[#fbdca0] !to-[#f3bd63] text-[#800080]">筋号</th><th>直径(mm)</th><th>级别</th><th>图号</th><th class="text-right pr-[6px]">图形</th></tr>
              <tr class="h-[34px] bg-[#ccffd5]"><td class="bg-[#ffd58a] text-center text-[#800080]">1*</td><td class="bg-[#b8f0dc] border-r-black !pl-[2px] !pr-[8px]">1跨.上通长筋1</td><td class="!pl-px">25</td><td class="text-center">Φ</td><td class="!pl-[2px]">64</td><td><div class="flex items-center"><span class="w-[38px] text-right pr-px">375</span><div class="w-[78px] h-[14px] -mt-[2px] flex items-center justify-end pr-[5px] border-l-2 border-b-2 border-black text-[#f00]">3335</div></div></td></tr>
              <tr class="h-[34px] bg-[#ccffd5]"><td class="bg-linear-to-b from-white to-[#eee] text-center">2</td><td class="border-r-black !pl-[2px] !pr-[8px]">1跨.上通长筋2</td><td class="!pl-px">25</td><td class="text-center">Φ</td><td class="!pl-[2px]">64</td><td><div class="flex items-center"><span class="w-[38px] text-right pr-px">520</span><div class="w-[78px] h-[14px] -mt-[2px] flex items-center justify-end pr-[5px] border-l-2 border-b-2 border-black text-[#f00]">6021</div></div></td></tr>
              <tr class="h-[34px] bg-[#ccffd5]"><td class="bg-linear-to-b from-white to-[#eee] text-center">3</td><td class="border-r-black !pl-[2px] !pr-[8px]">1跨.上通长筋3</td><td class="!pl-px">25</td><td class="text-center">Φ</td><td class="!pl-[2px]">64</td><td><div class="flex items-center"><span class="w-[38px] text-right pr-px">375</span><div class="w-[78px] h-[14px] -mt-[2px] flex items-center justify-end pr-[5px] border-l-2 border-b-2 border-black text-[#f00]">6021</div></div></td></tr>
              <tr class="h-[34px] bg-[#ccffd5]"><td class="bg-linear-to-b from-white to-[#eee] text-center">4</td><td class="border-r-black !pl-[2px] !pr-[8px]">1跨.上通长筋4</td><td></td><td></td><td></td><td><div class="ml-[38px] w-[78px] h-[14px] border-l-2 border-b-2 border-black"></div></td></tr>
            </table>
            <div class="w-[16px] shrink-0 bg-[#f0f0f0] flex flex-col"><div class="h-[18px] bg-white flex items-center justify-center"><svg class="w-2 h-2 rotate-180"><use href="#dd"/></svg></div><div class="h-[17px] bg-[#c8c8c8]"></div></div>
          </div>
        </div>
      </section>
      <div class="w-[6px] shrink-0 border-l border-[#d8d9dc]"></div>
      <!-- span table -->
      <section class="flex-1 min-w-0 flex">
        <div class="w-[12px] shrink-0 pt-[3px]"><svg class="w-[10px] h-[10px]" viewBox="0 0 10 10"><path d="M.5.500h9v9h-9z" fill="#f4e4e4" stroke="#777"/><path d="M1 1l8 8M9 1L1 9" stroke="#804848"/></svg><i class="block mt-[3px] ml-[1px] w-[7px] h-[140px] bg-[radial-gradient(#bbb_1px,transparent_1.2px)] bg-[length:4px_4px]"></i></div>
        <div class="flex-1 min-w-0 flex flex-col">
          <div class="h-[30px] shrink-0 flex items-center whitespace-nowrap [&>span]:flex [&>span]:items-center [&>span]:shrink-0 [&>span>svg]:size-4 [&>span>svg]:shrink-0">
            <span class="ml-[4px] gap-[4px]"><svg><use href="#cpy2"/></svg>复制跨数据</span>
            <span class="ml-[7px] gap-[4px] text-[#a0a0a0]"><svg><use href="#paste"/></svg>粘贴跨数据</span>
            <span class="ml-[9px] text-[#a0a0a0]">输入当前列数据</span>
            <span class="ml-[96px] text-[11px] font-bold">»</span>
          </div>
          <div class="flex-1 bg-white border-t border-l border-[#c0c0c0] overflow-hidden">
            <table class="w-[536px] table-fixed border-collapse [&_td]:border [&_td]:border-[#b8b8b8] [&_td]:p-0 [&_td]:h-[19px] [&_th]:border [&_th]:border-[#b8b8b8] [&_th]:font-normal [&_th]:p-0 [&_th]:h-[19px] [&_th]:bg-linear-to-b [&_th]:from-white [&_th]:to-[#f0f0f0] font-['Liberation_Sans','Noto_Sans_CJK_SC',sans-serif]">
              <colgroup><col class="w-[31px]"><col class="w-[41px]"><col class="w-[61px]"><col class="w-[61px]"><col class="w-[41px]"><col class="w-[41px]"><col class="w-[41px]"><col class="w-[41px]"><col class="w-[178px]"></colgroup>
              <tr><th rowspan="2"></th><th rowspan="2" class="!from-[#fbdca0] !to-[#f3bd63] text-[#800080]">跨号</th><th colspan="2">标高(m)</th><th colspan="5">构件尺寸(mm)</th></tr>
              <tr><th>起点标高</th><th>终点标高</th><th class="text-[11px]">A1</th><th class="text-[11px]">A2</th><th class="text-[11px]">A3</th><th class="text-[11px]">A4</th><th class="text-left">跨</th></tr>
              <tr class="bg-[#a5c8ee]"><td rowspan="3" class="bg-[#ffd58a] text-center text-[#800080]">1</td><td class="relative bg-[#90c0f0] !border-[3px] !border-[#808080]"><i class="absolute -right-[5px] -bottom-[5px] w-[6px] h-[6px] bg-[#808080] border border-white"></i></td><td class="!pl-[2px]">2.95</td><td class="!pl-[2px]">2.95</td><td rowspan="3" class="text-center">(200)</td><td rowspan="3" class="text-center">(200)</td><td rowspan="3" class="text-center">(200)</td><td rowspan="3" class="text-center">(200)</td><td class="!pl-[4px]">(350*550)</td></tr>
              <tr><td rowspan="2" class="bg-[#90c0f0] border-r-black !pl-[2px] align-top">1</td><td class="!pl-[2px]">2.95</td><td class="!pl-[2px]">2.95</td><td class="!pl-[4px]">(200*200)</td></tr>
              <tr><td class="!pl-[2px]">2.95</td><td class="!pl-[2px]">2.95</td><td class="!pl-[4px]">(350*550)</td></tr>
            </table>
          </div>
        </div>
      </section>
    </div>
  </main>

  <div class="w-[2px] shrink-0 bg-[#e8e9eb]"></div>

  <!-- property editor -->
  <aside class="w-[223px] shrink-0 flex flex-col bg-white overflow-hidden">
    <div class="h-[15px] mt-[2px] pl-px border-y border-[#888] bg-[#f0f0f0] text-[13px] leading-[13px]">属性编辑器</div>
    <div class="pl-px pt-[3px] flex-1 border-l border-[#c8c8c8]">
      <table class="w-[222px] table-fixed border-collapse [&_td]:border [&_td]:border-[#c0c0c0] [&_td]:p-0 [&_td]:h-[19px] [&_td]:leading-[15px] [&_td:first-child]:text-center [&_td:first-child]:bg-linear-to-b [&_td:first-child]:from-white [&_td:first-child]:to-[#eee] [&_td:nth-child(2)]:pl-[19px] [&_td:nth-child(3)]:pl-[2px] [&_td:nth-child(3)]:whitespace-nowrap [&_td:nth-child(3)]:overflow-hidden [&_th]:border [&_th]:border-[#c0c0c0] [&_th]:font-normal [&_th]:h-[22px] [&_th]:bg-linear-to-b [&_th]:from-white [&_th]:to-[#efefef]">
        <colgroup><col class="w-[21px]"><col class="w-[121px]"><col class="w-[80px]"></colgroup>
        <tr><th></th><th>属性名称</th><th class="!from-[#fbdca0] !to-[#f3bd63]"></th></tr>
        <tr><td class="!from-[#ffd58a] !to-[#ffd58a] text-[#800080]">1</td><td class="bg-[#3399ff] text-white">名称</td><td class="bg-[#deeefc] font-['Liberation_Mono',monospace] text-[11px]">KL-1</td></tr>
        <tr><td>2</td><td class="text-[#0000ff]">类别</td><td>楼层框架梁</td></tr>
        <tr><td>3</td><td>截面宽度(mm)</td><td class="font-['Liberation_Sans',sans-serif]">350</td></tr>
        <tr><td>4</td><td>截面高度(mm)</td><td class="font-['Liberation_Sans',sans-serif]">550</td></tr>
        <tr><td>5</td><td class="whitespace-nowrap">轴线距梁左边线距</td><td class="font-['Liberation_Sans',sans-serif]">(175)</td></tr>
        <tr><td>6</td><td>跨数量</td><td class="font-['Liberation_Sans',sans-serif]">0A</td></tr>
        <tr><td>7</td><td class="text-[#0000ff]">箍筋</td><td class="font-['Liberation_Sans',sans-serif]"> Φ8@100/200(4)</td></tr>
        <tr><td>8</td><td class="text-[#0000ff]">肢数</td><td class="font-['Liberation_Sans',sans-serif]">4</td></tr>
        <tr><td>9</td><td class="text-[#0000ff]">上部通长筋</td><td class="font-['Liberation_Sans',sans-serif]">2 Φ25</td></tr>
        <tr><td>10</td><td class="text-[#0000ff]">下部通长筋</td><td class="font-['Liberation_Sans',sans-serif]">4 Φ25</td></tr>
        <tr><td>11</td><td class="text-[#0000ff]">侧面纵筋</td><td class="font-['Liberation_Sans',sans-serif]">G4 Φ25</td></tr>
        <tr><td>12</td><td class="text-[#0000ff]">拉筋</td><td class="font-['Liberation_Sans',sans-serif]">( Φ6)</td></tr>
        <tr><td>13</td><td class="text-[#0000ff]">其它箍筋</td><td></td></tr>
        <tr><td>14</td><td>备注</td><td></td></tr>
        <tr><td>15</td><td class="!pl-[2px] text-[#808080]"><span class="flex items-center gap-[5px]"><b class="w-[13px] h-[13px] border border-[#aaa] flex items-center justify-center font-normal text-[#222]">+</b>其它属性</span></td><td></td></tr>
        <tr><td>23</td><td class="!pl-[2px] text-[#808080]"><span class="flex items-center gap-[5px]"><b class="w-[13px] h-[13px] border border-[#aaa] flex items-center justify-center font-normal text-[#222]">+</b>锚固搭接</span></td><td></td></tr>
        <tr><td>38</td><td class="!pl-[2px] text-[#808080]"><span class="flex items-center gap-[5px]"><b class="w-[13px] h-[13px] border border-[#aaa] flex items-center justify-center font-normal text-[#222]">+</b>显示样式</span></td><td></td></tr>
      </table>
    </div>
  </aside>
</div>
</body>
</html>
